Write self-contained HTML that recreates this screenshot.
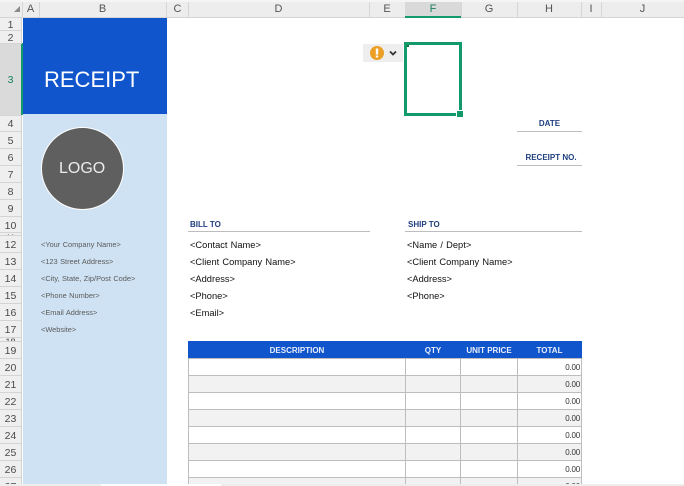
<!DOCTYPE html>
<html>
<head>
<meta charset="utf-8">
<style>
html,body{margin:0;padding:0;background:#fff}
#p{position:relative;width:684px;height:486px;overflow:hidden;background:#fff;font-family:"Liberation Sans",sans-serif}
#p div{position:absolute;box-sizing:border-box}
.t{white-space:nowrap;line-height:14px}
.ch{top:2px;height:15px;line-height:14px;font-size:11px;color:#555;text-align:center}
.cs{top:2px;width:1px;height:15px;background:#d6d6d6}
.rh{left:0;width:22px;text-align:center;font-size:10.5px;color:#4a4a4a;line-height:16px;padding-right:1px}
.rs{left:0;width:22px;height:1px;background:#d4d4d4}
.side{left:41px;font-size:7.4px;color:#5a5a5a;word-spacing:.4px}
.body{font-size:9.3px;color:#111;word-spacing:.6px}
.lab{font-size:8px;font-weight:bold;color:#1f3f7e}
.th{top:346px;font-size:8px;font-weight:bold;color:#e8eefb;text-align:center;line-height:10px}
.num{left:517px;width:63px;text-align:right;font-size:8px;color:#333;letter-spacing:-.2px}
.hl{left:188px;width:394px;height:1px;background:#bdbdbd}
.vl{top:358px;width:1px;height:126px;background:#bdbdbd}
</style>
</head>
<body>
<div id="p">
<!-- column header -->
<div style="left:0;top:0;width:684px;height:18px;background:#ededed;border-bottom:1px solid #d4d4d4"></div>
<div style="left:0;top:0;width:684px;height:2px;background:#f5f5f5"></div>
<svg style="position:absolute;left:10px;top:6px" width="10" height="8"><path d="M10 0V6H4Z" fill="#8a8a8a"/></svg>
<div class="cs" style="left:22px"></div><div class="cs" style="left:39px"></div><div class="cs" style="left:166px"></div><div class="cs" style="left:188px"></div><div class="cs" style="left:369px"></div><div class="cs" style="left:517px"></div><div class="cs" style="left:581px"></div><div class="cs" style="left:601px"></div><div class="cs" style="left:461px"></div>
<div style="left:405px;top:2px;width:56px;height:16px;background:#d9d9d9;border-bottom:2px solid #129a6b"></div>
<div class="ch" style="left:22px;width:17px">A</div>
<div class="ch" style="left:39px;width:127px">B</div>
<div class="ch" style="left:167px;width:21px">C</div>
<div class="ch" style="left:188px;width:181px">D</div>
<div class="ch" style="left:369px;width:36px">E</div>
<div class="ch" style="left:405px;width:56px;color:#16805c">F</div>
<div class="ch" style="left:461px;width:56px">G</div>
<div class="ch" style="left:517px;width:64px">H</div>
<div class="ch" style="left:581px;width:20px">I</div>
<div class="ch" style="left:601px;width:83px">J</div>

<!-- row header -->
<div style="left:0;top:18px;width:22px;height:466px;background:#efefef;border-right:1px solid #d4d4d4"></div>
<div style="left:0;top:43px;width:21px;height:72px;background:#dadada"></div>
<div style="left:21px;top:43px;width:2px;height:72px;background:#129a6b"></div>
<div class="rs" style="top:30px"></div><div class="rs" style="top:43px"></div><div class="rs" style="top:115px"></div>
<div class="rs" style="top:131px"></div><div class="rs" style="top:148px"></div><div class="rs" style="top:165px"></div><div class="rs" style="top:182px"></div><div class="rs" style="top:199px"></div><div class="rs" style="top:216px"></div><div class="rs" style="top:232px"></div><div class="rs" style="top:235px"></div><div class="rs" style="top:252px"></div><div class="rs" style="top:269px"></div><div class="rs" style="top:286px"></div><div class="rs" style="top:303px"></div><div class="rs" style="top:320px"></div><div class="rs" style="top:337px"></div><div class="rs" style="top:341px"></div><div class="rs" style="top:358px"></div><div class="rs" style="top:375px"></div><div class="rs" style="top:392px"></div><div class="rs" style="top:409px"></div><div class="rs" style="top:426px"></div><div class="rs" style="top:443px"></div><div class="rs" style="top:460px"></div><div class="rs" style="top:477px"></div>
<div class="rh" style="top:17px">1</div>
<div class="rh" style="top:30px">2</div>
<div class="rh" style="top:72px;color:#16805c">3</div>
<div class="rh" style="top:116px">4</div>
<div class="rh" style="top:133px">5</div>
<div class="rh" style="top:150px">6</div>
<div class="rh" style="top:167px">7</div>
<div class="rh" style="top:184px">8</div>
<div class="rh" style="top:201px">9</div>
<div class="rh" style="top:218px">10</div>
<div class="rh" style="top:233px;height:2px;overflow:hidden;line-height:10px;font-size:9px">11</div>
<div class="rh" style="top:237px">12</div>
<div class="rh" style="top:254px">13</div>
<div class="rh" style="top:271px">14</div>
<div class="rh" style="top:288px">15</div>
<div class="rh" style="top:305px">16</div>
<div class="rh" style="top:322px">17</div>
<div class="rh" style="top:338px;height:3px;overflow:hidden;line-height:9px;font-size:9px">18</div>
<div class="rh" style="top:343px">19</div>
<div class="rh" style="top:360px">20</div>
<div class="rh" style="top:377px">21</div>
<div class="rh" style="top:394px">22</div>
<div class="rh" style="top:411px">23</div>
<div class="rh" style="top:428px">24</div>
<div class="rh" style="top:445px">25</div>
<div class="rh" style="top:462px">26</div>
<div class="rh" style="top:479px;height:5px;overflow:hidden">27</div>

<!-- sidebar -->
<div style="left:23px;top:18px;width:144px;height:96px;background:#1155cc"></div>
<div style="left:23px;top:114px;width:144px;height:370px;background:#cfe2f3"></div>
<div class="t" style="left:44px;top:66px;font-size:22px;line-height:28px;color:#fff">RECEIPT</div>
<div style="left:41px;top:127px;width:83px;height:83px;border-radius:50%;background:#5f5f5f;border:1.5px solid #fff"></div>
<div class="t" style="left:59px;top:159px;font-size:16px;line-height:20px;color:#ececec">LOGO</div>
<div class="t side" style="top:238px">&lt;Your Company Name&gt;</div>
<div class="t side" style="top:255px">&lt;123 Street Address&gt;</div>
<div class="t side" style="top:272px">&lt;City, State, Zip/Post Code&gt;</div>
<div class="t side" style="top:289px">&lt;Phone Number&gt;</div>
<div class="t side" style="top:306px">&lt;Email Address&gt;</div>
<div class="t side" style="top:323px">&lt;Website&gt;</div>

<!-- warning icon + selection -->
<div style="left:363px;top:44px;width:40px;height:18px;background:#eeeeee"></div>
<svg style="position:absolute;left:369px;top:45px" width="16" height="16"><circle cx="8" cy="8" r="7" fill="#ec9f25"/><rect x="6.8" y="3.5" width="2.4" height="6" fill="#fff"/><rect x="6.8" y="10.5" width="2.4" height="2" fill="#fff"/></svg>
<svg style="position:absolute;left:389px;top:50px" width="8" height="6"><path d="M1 1.5L4 4.5L7 1.5" fill="none" stroke="#333" stroke-width="1.8"/></svg>
<div style="left:404px;top:42px;width:58px;height:74px;border:3px solid #129a6b"></div>
<div style="left:407px;top:45px;width:2px;height:2px;background:#0a7a3c"></div>
<div style="left:457px;top:111px;width:6px;height:6px;background:#129a6b;outline:1px solid #fff"></div>

<!-- date / receipt no -->
<div class="t lab" style="left:517px;top:117px;width:65px;text-align:center">DATE</div>
<div class="hl" style="left:517px;width:65px;top:131px"></div>
<div class="t lab" style="left:517px;top:151px;width:68px;text-align:center">RECEIPT NO.</div>
<div class="hl" style="left:517px;width:65px;top:165px"></div>

<!-- bill to -->
<div class="t lab" style="left:190px;top:218px">BILL TO</div>
<div class="hl" style="left:188px;width:182px;top:231px"></div>
<div class="t body" style="left:190px;top:238px">&lt;Contact Name&gt;</div>
<div class="t body" style="left:190px;top:255px">&lt;Client Company Name&gt;</div>
<div class="t body" style="left:190px;top:272px">&lt;Address&gt;</div>
<div class="t body" style="left:190px;top:289px">&lt;Phone&gt;</div>
<div class="t body" style="left:190px;top:306px">&lt;Email&gt;</div>

<!-- ship to -->
<div class="t lab" style="left:408px;top:218px">SHIP TO</div>
<div class="hl" style="left:405px;width:177px;top:231px"></div>
<div class="t body" style="left:407px;top:238px">&lt;Name / Dept&gt;</div>
<div class="t body" style="left:407px;top:255px">&lt;Client Company Name&gt;</div>
<div class="t body" style="left:407px;top:272px">&lt;Address&gt;</div>
<div class="t body" style="left:407px;top:289px">&lt;Phone&gt;</div>

<!-- table -->
<div style="left:188px;top:341px;width:394px;height:17px;background:#1155cc"></div>
<div class="th" style="left:188px;width:218px">DESCRIPTION</div>
<div class="th" style="left:405px;width:56px">QTY</div>
<div class="th" style="left:461px;width:56px">UNIT PRICE</div>
<div class="th" style="left:517px;width:65px">TOTAL</div>
<div style="left:188px;top:375px;width:394px;height:17px;background:#f2f2f2"></div>
<div style="left:188px;top:409px;width:394px;height:17px;background:#f2f2f2"></div>
<div style="left:188px;top:443px;width:394px;height:17px;background:#f2f2f2"></div>
<div style="left:188px;top:477px;width:394px;height:7px;background:#f2f2f2"></div>
<div class="hl" style="top:358px"></div><div class="hl" style="top:375px"></div><div class="hl" style="top:392px"></div><div class="hl" style="top:409px"></div><div class="hl" style="top:426px"></div><div class="hl" style="top:443px"></div><div class="hl" style="top:460px"></div><div class="hl" style="top:477px"></div>
<div class="vl" style="left:188px"></div><div class="vl" style="left:405px"></div><div class="vl" style="left:460px"></div><div class="vl" style="left:517px"></div><div class="vl" style="left:581px"></div>
<div class="t num" style="top:361px">0.00</div>
<div class="t num" style="top:378px">0.00</div>
<div class="t num" style="top:395px">0.00</div>
<div class="t num" style="top:412px">0.00</div>
<div class="t num" style="top:429px">0.00</div>
<div class="t num" style="top:446px">0.00</div>
<div class="t num" style="top:463px">0.00</div>
<div class="t num" style="top:480px;height:4px;overflow:hidden">0.00</div>

<!-- bottom bar -->
<div style="left:0;top:484px;width:684px;height:2px;background:#ededed"></div>
<div style="left:101px;top:484px;width:120px;height:2px;background:#fff"></div>
</div>
</body>
</html>
